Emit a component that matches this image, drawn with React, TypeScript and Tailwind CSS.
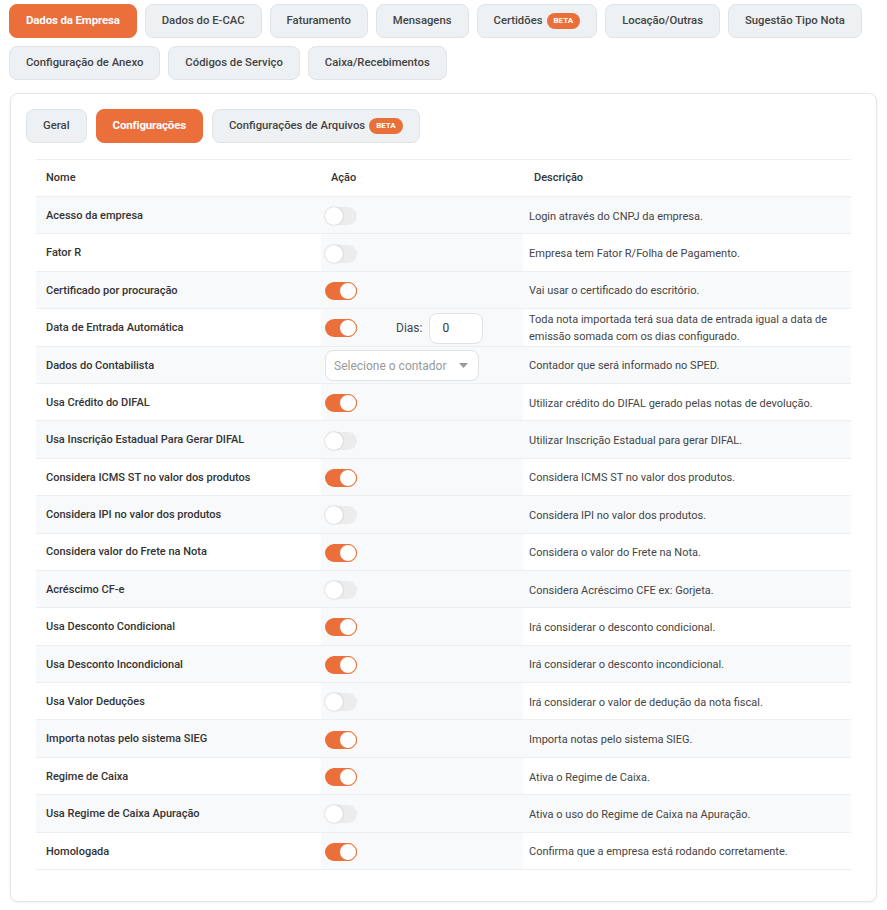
import { useState } from "react";

const topTabs = [
  ["Dados da Empresa", "Dados do E-CAC", "Faturamento", "Mensagens", "Certidões", "Locação/Outras", "Sugestão Tipo Nota"],
  ["Configuração de Anexo", "Códigos de Serviço", "Caixa/Recebimentos"],
];

const rows: { name: string; on: boolean; desc: string; extra?: "dias" | "select" }[] = [
  { name: "Acesso da empresa", on: false, desc: "Login através do CNPJ da empresa." },
  { name: "Fator R", on: false, desc: "Empresa tem Fator R/Folha de Pagamento." },
  { name: "Certificado por procuração", on: true, desc: "Vai usar o certificado do escritório." },
  {
    name: "Data de Entrada Automática",
    on: true,
    desc: "Toda nota importada terá sua data de entrada igual a data de emissão somada com os dias configurado.",
    extra: "dias",
  },
  { name: "Dados do Contabilista", on: false, desc: "Contador que será informado no SPED.", extra: "select" },
  { name: "Usa Crédito do DIFAL", on: true, desc: "Utilizar crédito do DIFAL gerado pelas notas de devolução." },
  { name: "Usa Inscrição Estadual Para Gerar DIFAL", on: false, desc: "Utilizar Inscrição Estadual para gerar DIFAL." },
  { name: "Considera ICMS ST no valor dos produtos", on: true, desc: "Considera ICMS ST no valor dos produtos." },
  { name: "Considera IPI no valor dos produtos", on: false, desc: "Considera IPI no valor dos produtos." },
  { name: "Considera valor do Frete na Nota", on: true, desc: "Considera o valor do Frete na Nota." },
  { name: "Acréscimo CF-e", on: false, desc: "Considera Acréscimo CFE ex: Gorjeta." },
  { name: "Usa Desconto Condicional", on: true, desc: "Irá considerar o desconto condicional." },
  { name: "Usa Desconto Incondicional", on: true, desc: "Irá considerar o desconto incondicional." },
  { name: "Usa Valor Deduções", on: false, desc: "Irá considerar o valor de dedução da nota fiscal." },
  { name: "Importa notas pelo sistema SIEG", on: true, desc: "Importa notas pelo sistema SIEG." },
  { name: "Regime de Caixa", on: true, desc: "Ativa o Regime de Caixa." },
  { name: "Usa Regime de Caixa Apuração", on: false, desc: "Ativa o uso do Regime de Caixa na Apuração." },
  { name: "Homologada", on: true, desc: "Confirma que a empresa está rodando corretamente." },
];

const Beta = () => (
  <span className="ml-[4px] inline-flex h-[16px] items-center rounded-full bg-[#ea6f3b] px-[7px] text-[8px] font-bold text-white">
    BETA
  </span>
);

const Tab = ({ label, active }: { label: string; active?: boolean }) => (
  <button
    className={
      active
        ? "flex h-[34px] shrink-0 items-center whitespace-nowrap rounded-lg border border-[#ea6f3b] bg-[#ea6f3b] px-[16px] text-[11.5px] font-bold tracking-[-0.15px] text-white"
        : "flex h-[34px] shrink-0 items-center whitespace-nowrap rounded-lg border border-[#dfe3e6] bg-[#eef1f3] px-[16px] text-[11.3px] font-medium text-[#444]"
    }
  >
    {label}
    {(label === "Certidões" || label === "Configurações de Arquivos") && <Beta />}
  </button>
);

const Toggle = ({ on }: { on: boolean }) => (
  <span
    className={
      on
        ? "relative inline-block h-[18px] w-[32px] rounded-full bg-[#ea6f3b]"
        : "relative inline-block h-[18px] w-[32px] rounded-full bg-[#ececec]"
    }
  >
    <span
      className={
        on
          ? "absolute right-0 top-0 h-[18px] w-[18px] rounded-full border border-[#ea6f3b] bg-white"
          : "absolute left-0 top-0 h-[18px] w-[18px] rounded-full bg-white shadow-[0_0_2px_rgba(0,0,0,0.25)]"
      }
    />
  </span>
);

export default function App() {
  const [dias, setDias] = useState("0");
  return (
    <div className="min-h-screen bg-white px-[9px] pt-[4px] font-['Roboto',sans-serif] text-[#333]">
      <div className="flex flex-col gap-[8px]">
        {topTabs.map((line, i) => (
          <div key={i} className="flex gap-[8px]">
            {line.map((t) => (
              <Tab key={t} label={t} active={t === "Dados da Empresa"} />
            ))}
          </div>
        ))}
      </div>

      <div className="ml-[1px] mr-[1px] mt-[13px] rounded-lg border border-[#e3e6e8] bg-white px-[15px] pb-[31px] pt-[15px] shadow-[0_1px_3px_rgba(0,0,0,0.06)]">
        <div className="flex gap-[9px]">
          <Tab label="Geral" />
          <Tab label="Configurações" active />
          <Tab label="Configurações de Arquivos" />
        </div>

        <div className="mx-[10px] mt-[16px] border-t border-[#eceef0]">
          <div className="flex h-[37px] items-center border-b border-[#eceef0] text-[11px] font-medium text-[#333]">
            <div className="w-[285px] pl-[10px]">Nome</div>
            <div className="w-[202px] pl-[10px]">Ação</div>
            <div className="flex-1 pl-[11px]">Descrição</div>
          </div>
          {rows.map((r, i) => (
            <div
              key={r.name}
              className={
                i % 2 === 0
                  ? "flex h-[37.4px] items-stretch border-b border-[#eceef0] bg-[#f8f9fb] text-[11px]"
                  : "flex h-[37.4px] items-stretch border-b border-[#eceef0] bg-white text-[11px]"
              }
            >
              <div className="flex w-[285px] items-center pl-[10px] pt-[2px] font-medium text-[#333]">{r.name}</div>
              <div className="flex w-[202px] items-center bg-[#f8f9fb] pl-[4px] pt-[2px]">
                {r.extra === "select" ? (
                  <div className="flex h-[31px] w-[154px] items-center justify-between rounded-lg border border-[#dfe3e6] bg-white pl-[8px] pr-[10px] text-[12px] text-[#999]">
                    <span>Selecione o contador</span>
                    <svg width="9" height="5" viewBox="0 0 9 5">
                      <path d="M0 0h9L4.5 5z" fill="#999" />
                    </svg>
                  </div>
                ) : (
                  <>
                    <Toggle on={r.on} />
                    {r.extra === "dias" && (
                      <>
                        <span className="ml-[39px] text-[12px] text-[#444]">Dias:</span>
                        <input
                          value={dias}
                          onChange={(e) => setDias(e.target.value)}
                          className="ml-[7px] h-[31px] w-[54px] rounded-lg border border-[#dfe3e6] bg-white px-[12px] text-[12px] text-[#333] outline-none"
                        />
                      </>
                    )}
                  </>
                )}
              </div>
              <div className="flex flex-1 items-center pl-[6px] pr-[8px] pt-[2px] leading-[17px] text-[#444]">{r.desc}</div>
            </div>
          ))}
        </div>
      </div>
    </div>
  );
}
